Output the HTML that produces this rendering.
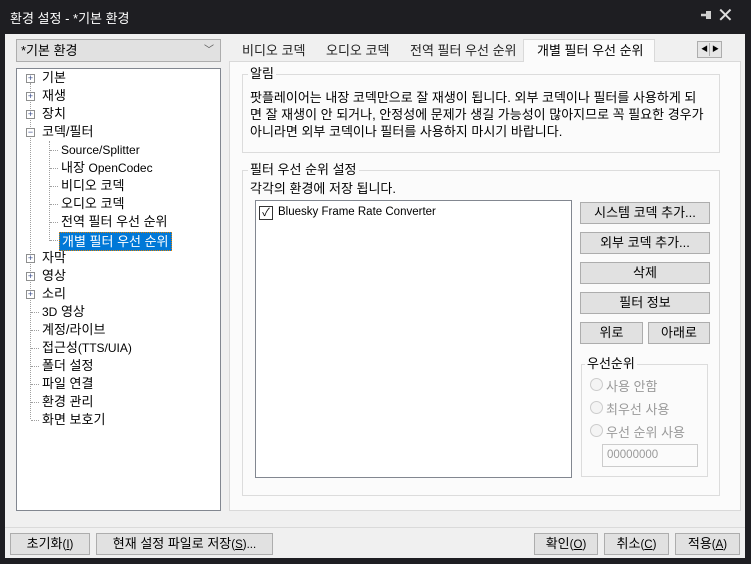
<!DOCTYPE html>
<html><head><meta charset="utf-8"><style>
*{box-sizing:border-box;margin:0;padding:0}
body{width:751px;height:564px;background:#1e1e22;font-family:"Liberation Sans","Noto Sans CJK KR",sans-serif;font-size:13px;color:#000;position:relative;overflow:hidden}
.l{font-size:11.5px}
.a{position:absolute;white-space:nowrap}
#title{left:10px;top:8px;color:#fff;font-size:13px}
#body{left:5px;top:34px;width:740px;height:524px;background:#f0f0f0}
.btn{position:absolute;background:#e1e1e1;border:1px solid #adadad;text-align:center;line-height:20px;height:22px;white-space:nowrap}
.tv{position:absolute;line-height:18px;white-space:nowrap}
.pl{position:absolute;width:9px;height:9px;border:1px solid #8e8f8f;background:#fff;font-size:9px;line-height:7px;text-align:center;color:#3b4d8a}
.gb{position:absolute;border:1px solid #dcdcdc}
.gt{position:absolute;background:#fbfbfb;padding:0 2px;top:-9px;left:5px;line-height:16px;white-space:nowrap}
.dot{position:absolute;border-left:1px dotted #a0a0a0}
.doth{position:absolute;border-top:1px dotted #a0a0a0;width:8px}
.rad{position:absolute;width:13px;height:13px;border-radius:50%;border:1px solid #ccc;background:#f4f4f4}
.gray{color:#9a9a9a}
</style></head><body>
<div class="a" id="title">환경 설정 - *기본 환경</div>
<div class="a" style="left:701px;top:11px;width:10px;height:8px;background:#d0d0d0;clip-path:polygon(0 35%,50% 35%,50% 0,100% 0,100% 100%,50% 100%,50% 65%,0 65%)"></div>
<div class="a" style="left:717px;top:3px;color:#ddd;font-size:20px">✕</div>
<div class="a" id="body"></div>
<!-- combo -->
<div class="a" style="left:16px;top:39px;width:205px;height:23px;background:#e1e1e1;border:1px solid #adadad;padding-left:4px;line-height:21px">*기본 환경<span style="position:absolute;right:6px;top:0;color:#555;font-size:10px">﹀</span></div>
<!-- tree -->
<div class="a" style="left:16px;top:68px;width:205px;height:443px;background:#fff;border:1px solid #828790"></div>
<div class="dot" style="left:30px;top:83px;height:336px"></div>
<div class="dot" style="left:49px;top:141px;height:100px"></div>
<div class="pl" style="left:26px;top:74px">+</div><div class="tv" style="left:42px;top:69px">기본</div>
<div class="pl" style="left:26px;top:92px">+</div><div class="tv" style="left:42px;top:87px">재생</div>
<div class="pl" style="left:26px;top:110px">+</div><div class="tv" style="left:42px;top:105px">장치</div>
<div class="pl" style="left:26px;top:128px">−</div><div class="tv" style="left:42px;top:123px">코덱/필터</div>
<div class="doth" style="left:50px;top:150px"></div><div class="tv l" style="left:61px;top:141px;font-size:12px">Source/Splitter</div>
<div class="doth" style="left:50px;top:168px"></div><div class="tv" style="left:61px;top:159px">내장 <span style="font-size:12px">OpenCodec</span></div>
<div class="doth" style="left:50px;top:186px"></div><div class="tv" style="left:61px;top:177px">비디오 코덱</div>
<div class="doth" style="left:50px;top:204px"></div><div class="tv" style="left:61px;top:195px">오디오 코덱</div>
<div class="doth" style="left:50px;top:222px"></div><div class="tv" style="left:61px;top:213px">전역 필터 우선 순위</div>
<div class="doth" style="left:50px;top:240px"></div><div class="tv" style="left:59px;top:232px;background:#0078d7;color:#fff;padding:0 2px;line-height:17px;border:1px dotted #e08000">개별 필터 우선 순위</div>
<div class="pl" style="left:26px;top:254px">+</div><div class="tv" style="left:42px;top:249px">자막</div>
<div class="pl" style="left:26px;top:272px">+</div><div class="tv" style="left:42px;top:267px">영상</div>
<div class="pl" style="left:26px;top:290px">+</div><div class="tv" style="left:42px;top:285px">소리</div>
<div class="doth" style="left:31px;top:312px"></div><div class="tv" style="left:42px;top:303px"><span style="font-size:12px">3D</span> 영상</div>
<div class="doth" style="left:31px;top:330px"></div><div class="tv" style="left:42px;top:321px">계정/라이브</div>
<div class="doth" style="left:31px;top:348px"></div><div class="tv" style="left:42px;top:339px">접근성<span style="font-size:12px">(TTS/UIA)</span></div>
<div class="doth" style="left:31px;top:366px"></div><div class="tv" style="left:42px;top:357px">폴더 설정</div>
<div class="doth" style="left:31px;top:384px"></div><div class="tv" style="left:42px;top:375px">파일 연결</div>
<div class="doth" style="left:31px;top:402px"></div><div class="tv" style="left:42px;top:393px">환경 관리</div>
<div class="doth" style="left:31px;top:420px"></div><div class="tv" style="left:42px;top:411px">화면 보호기</div>
<!-- tabs -->
<div class="a" style="left:229px;top:61px;width:512px;height:450px;background:#fbfbfb;border:1px solid #d9d9d9"></div>
<div class="a" style="left:242px;top:40px;color:#222">비디오 코덱</div>
<div class="a" style="left:326px;top:40px;color:#222">오디오 코덱</div>
<div class="a" style="left:410px;top:40px;color:#222">전역 필터 우선 순위</div>
<div class="a" style="left:523px;top:39px;width:132px;height:23px;background:#fbfbfb;border:1px solid #d9d9d9;border-bottom:none;padding-left:13px;line-height:21px">개별 필터 우선 순위</div>
<div class="a" style="left:697px;top:41px;width:25px;height:17px;background:#e6e6e6;border:1px solid #adadad"><span style="position:absolute;left:11px;top:1px;height:13px;border-left:1px solid #adadad"></span><span style="position:absolute;left:3px;top:0;font-size:7px;line-height:15px">◀</span><span style="position:absolute;left:14px;top:0;font-size:7px;line-height:15px">▶</span></div>
<!-- group 알림 -->
<div class="gb" style="left:242px;top:74px;width:478px;height:79px"><div class="gt">알림</div></div>
<div class="a" style="left:250px;top:89px;line-height:17px">팟플레이어는 내장 코덱만으로 잘 재생이 됩니다. 외부 코덱이나 필터를 사용하게 되<br>면 잘 재생이 안 되거나, 안정성에 문제가 생길 가능성이 많아지므로 꼭 필요한 경우가<br>아니라면 외부 코덱이나 필터를 사용하지 마시기 바랍니다.</div>
<!-- group 필터 -->
<div class="gb" style="left:242px;top:170px;width:478px;height:326px"><div class="gt">필터 우선 순위 설정</div></div>
<div class="a" style="left:250px;top:178px">각각의 환경에 저장 됩니다.</div>
<div class="a" style="left:255px;top:200px;width:317px;height:278px;background:#fff;border:1px solid #828790"></div>
<div class="a" style="left:259px;top:206px;width:14px;height:14px;border:1px solid #333;background:#fff;font-size:11px;line-height:12px;text-align:center">✓</div>
<div class="a l" style="left:278px;top:206px">Bluesky Frame Rate Converter</div>
<div class="btn" style="left:580px;top:202px;width:130px">시스템 코덱 추가...</div>
<div class="btn" style="left:580px;top:232px;width:130px">외부 코덱 추가...</div>
<div class="btn" style="left:580px;top:262px;width:130px">삭제</div>
<div class="btn" style="left:580px;top:292px;width:130px">필터 정보</div>
<div class="btn" style="left:580px;top:322px;width:63px">위로</div>
<div class="btn" style="left:648px;top:322px;width:62px">아래로</div>
<div class="gb" style="left:581px;top:364px;width:127px;height:113px"><div class="gt" style="left:3px">우선순위</div></div>
<div class="rad" style="left:590px;top:378px"></div><div class="a gray" style="left:606px;top:376px">사용 안함</div>
<div class="rad" style="left:590px;top:401px"></div><div class="a gray" style="left:606px;top:399px">최우선 사용</div>
<div class="rad" style="left:590px;top:424px"></div><div class="a gray" style="left:606px;top:422px">우선 순위 사용</div>
<div class="a gray l" style="left:602px;top:444px;width:96px;height:23px;border:1px solid #ccc;background:#fbfbfb;padding-left:4px;line-height:21px">00000000</div>
<!-- bottom -->
<div class="a" style="left:5px;top:527px;width:740px;border-top:1px solid #dadada"></div>
<div class="btn" style="left:10px;top:533px;width:80px">초기화<span class="l">(<u>I</u>)</span></div>
<div class="btn" style="left:96px;top:533px;width:177px">현재 설정 파일로 저장<span class="l">(<u>S</u>)...</span></div>
<div class="btn" style="left:534px;top:533px;width:64px">확인<span class="l">(<u>O</u>)</span></div>
<div class="btn" style="left:604px;top:533px;width:65px">취소<span class="l">(<u>C</u>)</span></div>
<div class="btn" style="left:675px;top:533px;width:65px">적용<span class="l">(<u>A</u>)</span></div>
</body></html>
